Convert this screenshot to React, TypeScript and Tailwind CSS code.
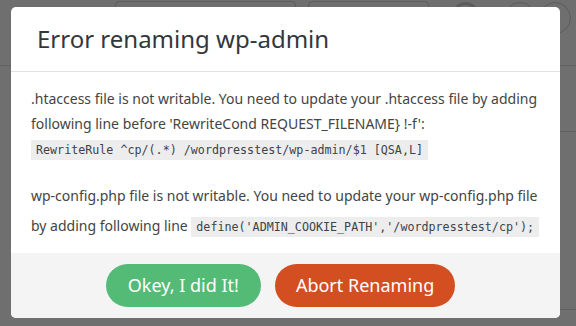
import React from "react";

const sans = { fontFamily: '"Noto Sans", "Open Sans", sans-serif' };
const mono = { fontFamily: '"DejaVu Sans Mono", "Liberation Mono", monospace' };

function Backdrop() {
  // the page behind the dimmed overlay
  return (
    <div className="flex h-full w-full flex-col bg-[#6f6f6f]">
      <div className="flex h-[66px] items-start border-b border-[#616161] pt-px">
        <div className="ml-[115px] h-[40px] w-[181px] rounded-[4px] border border-[#5c5c5c]" />
        <div className="ml-[12px] h-[40px] w-[121px] rounded-[4px] border border-[#5c5c5c]" />
        <div className="ml-[23px] mt-px h-[27px] w-[27px] rounded-full border-[3px] border-[#5c5c5c]" />
        <div className="ml-[25px] mt-px h-[32px] w-[32px] rounded-full border border-[#5c5c5c]" />
        <div className="ml-[3px] mt-px h-[32px] w-[32px] rounded-full border border-[#5c5c5c]" />
      </div>
      <div className="flex h-[66px] justify-end">
        <div className="w-[40px] border-b border-[#616161]" />
      </div>
      <div className="flex h-[178px] justify-end">
        <div className="w-[40px] border-b border-[#616161]" />
      </div>
    </div>
  );
}

export default function App() {
  return (
    <div className="relative h-[326px] w-[576px] overflow-hidden" style={sans}>
      <Backdrop />

      {/* Modal */}
      <div className="absolute left-[11px] top-[7px] flex h-[311px] w-[549px] flex-col overflow-hidden rounded-[5px] bg-white">
        <div className="flex h-[65px] shrink-0 items-center border-b border-[#e2e2e2] px-[26px] pb-px">
          <h1 className="text-[24px] leading-none text-[#32373c]">Error renaming wp-admin</h1>
        </div>

        <div className="flex-1 pl-[20px] pr-[15px] pt-[14px] text-[14px] leading-[25px] text-[#444]">
          <p>
            .htaccess file is not writable. You need to update your .htaccess file by adding
            following line before 'RewriteCond REQUEST_FILENAME{"}"} !-f':
            <br />
            <code
              className="bg-[#ededed] px-[5px] py-[3px] text-[11.7px] text-[#3c434a]"
              style={mono}
            >
              RewriteRule ^cp/(.*) /wordpresstest/wp-admin/$1 [QSA,L]
            </code>
          </p>
          <p className="mt-[18px] leading-[30px]">
            wp-config.php file is not writable. You need to update your wp-config.php file by
            adding following line{" "}
            <code
              className="bg-[#ededed] px-[5px] py-[3px] text-[11.7px] text-[#3c434a]"
              style={mono}
            >
              define('ADMIN_COOKIE_PATH','/wordpresstest/cp');
            </code>
          </p>
        </div>

        <div className="flex h-[65px] shrink-0 items-center justify-center gap-[14px] bg-[#f4f4f4] pr-[10px]">
          <button className="h-[43px] rounded-full bg-[#54bb77] px-[22px] text-[18px] text-white">
            Okey, I did It!
          </button>
          <button className="h-[43px] rounded-full bg-[#d34f22] px-[21px] text-[18px] text-white">
            Abort Renaming
          </button>
        </div>
      </div>
    </div>
  );
}
